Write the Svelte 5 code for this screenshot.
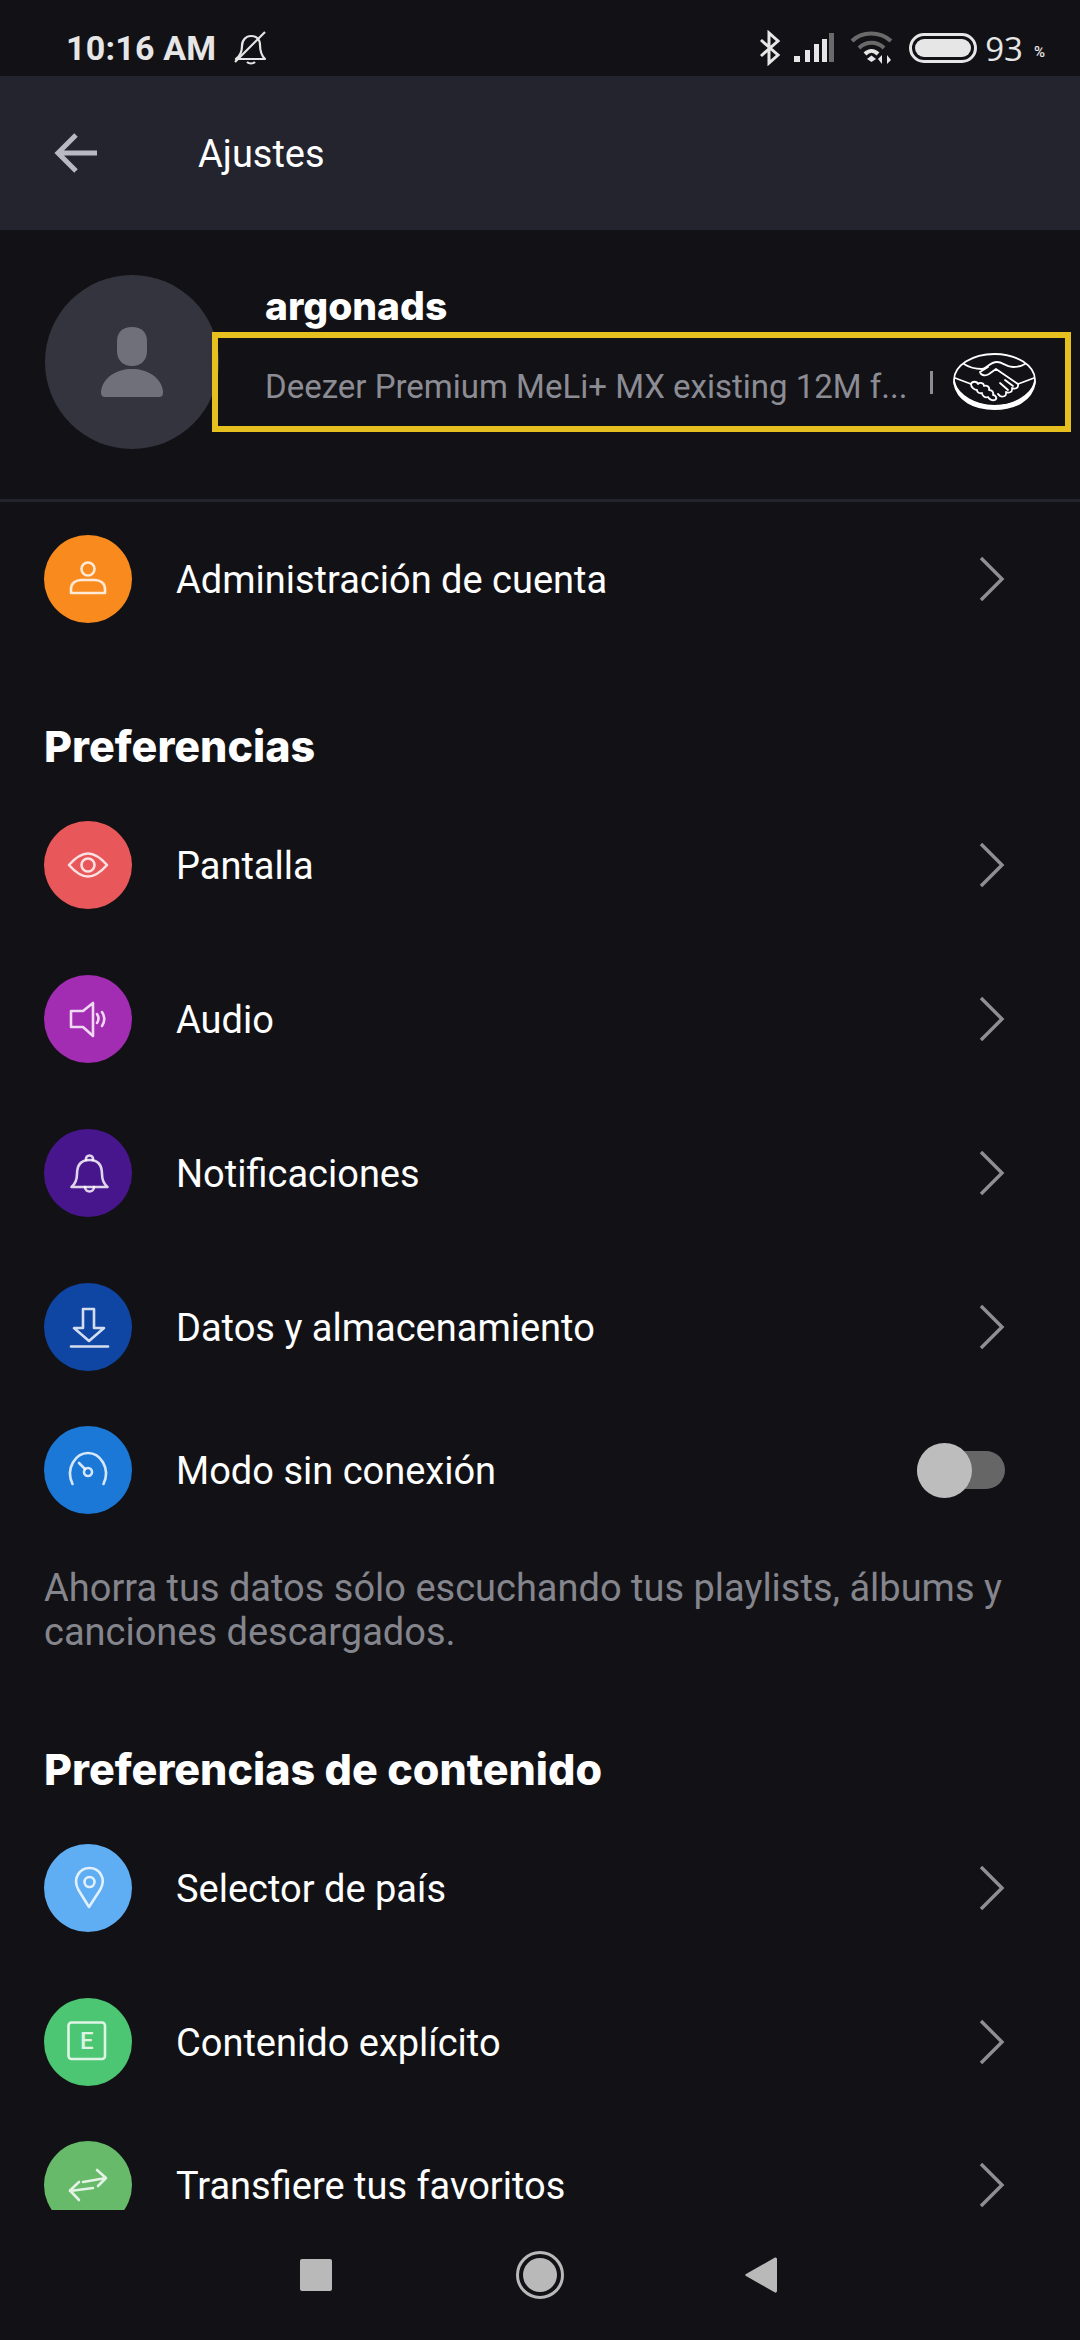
<script lang="ts">
  const prefs = [
    { label: 'Pantalla', tone: 'red', icon: 'eye' },
    { label: 'Audio', tone: 'purple', icon: 'speaker' },
    { label: 'Notificaciones', tone: 'violet', icon: 'bell' },
    { label: 'Datos y almacenamiento', tone: 'navy', icon: 'download' },
  ];
  const content = [
    { label: 'Selector de país', tone: 'sky', icon: 'pin' },
    { label: 'Contenido explícito', tone: 'green', icon: 'explicit' },
  ];
</script>

{#snippet chevron()}
  <svg class="chev" width="26" height="46" viewBox="0 0 26 46" fill="none">
    <path d="M2 2 L23 23 L2 44" stroke="#8e8e94" stroke-width="3.4" />
  </svg>
{/snippet}

{#snippet glyph(name: string)}
  <svg width="88" height="88" viewBox="0 0 88 88" fill="none" stroke="currentColor" stroke-width="2.6" stroke-linejoin="round" stroke-linecap="round">
    {#if name === 'user'}
      <circle cx="44" cy="34" r="6.500" />
      <path d="M27 58 V54 C27 48 32 45 37 45 H51 C56 45 61 48 61 54 V58 Z" />
    {:else if name === 'eye'}
      <path d="M25 44 C32 36 38 32.500 44 32.500 C50 32.500 56 36 63 44 C56 52 50 55.500 44 55.500 C38 55.500 32 52 25 44 Z" />
      <circle cx="44" cy="44" r="6.500" />
    {:else if name === 'speaker'}
      <path d="M27 36 H39 L49 28 V61 L39 52 H27 Z" />
      <path d="M53 39 C55 42 55 45 53 48" />
      <path d="M58 37 C61 41 61 47 58 51" />
    {:else if name === 'bell'}
      <path d="M27.500 58 C31 55 33 51 33 45 C33 36 37 31 45.500 31 C54 31 58 36 58 45 C58 51 60 55 63.500 58 Z" />
      <path d="M42 31 C41 25 50 25 49 31" />
      <path d="M41 58 C41 64 50 64 50 58" />
    {:else if name === 'download'}
      <path d="M39 26 H50 V45 H60 L45 58 L30 45 H39 Z" />
      <path d="M27 63.500 H64" />
    {:else if name === 'gauge'}
      <path d="M28.500 58 C21 42 32 27 44 27 C56 27 67 42 59.500 58" />
      <circle cx="44" cy="46" r="4" />
      <path d="M35 37 L41 43" />
    {:else if name === 'pin'}
      <path d="M45 63 L34.500 46 C28 34 36 24 45.500 24 C55 24 63 34 56 46 Z" />
      <circle cx="45.500" cy="38" r="5" />
    {:else if name === 'explicit'}
      <rect x="24.500" y="24.500" width="36.500" height="36.500" rx="3" />
      <text x="42.700" y="51" text-anchor="middle" class="e-mark">E</text>
    {:else if name === 'swap'}
      <path d="M39 41 L62 37 M53 29 L62 37 L54 45" />
      <path d="M49 47 L26 50 M35 41 L26 49.500 L35 59" />
    {/if}
  </svg>
{/snippet}

{#snippet row(label: string, tone: string, icon: string)}
  <div class="row">
    <span class="badge {tone}">{@render glyph(icon)}</span>
    <span class="label">{label}</span>
    {@render chevron()}
  </div>
{/snippet}

<div class="screen">
  <div class="status">
    <span class="time">10:16 AM</span>
    <svg class="muted-bell" width="34" height="34" viewBox="0 0 34 34" fill="none" stroke="#e6e6e6" stroke-width="2.200" stroke-linejoin="round">
      <path d="M2 28 H31 C27 24 26 20 26 14 C26 8 22 5 17 5 C12 5 8 9 8 15 C8 20 6 25 2 28 Z" />
      <path d="M13 31 C15 33 19 33 21 31" />
      <path d="M1 31 L31 1" />
    </svg>
    <span class="status-gap"></span>
    <svg class="s-bt" width="22" height="36" viewBox="0 0 22 36" fill="none" stroke="#e6e6e6" stroke-width="3">
      <path d="M2 10 L19 25 L10 33 V3 L19 11 L2 26" />
    </svg>
    <svg class="s-signal" width="40" height="30" viewBox="0 0 40 30">
      <rect x="0" y="23" width="6" height="6" fill="#e6e6e6" />
      <rect x="11" y="17" width="5" height="12" fill="#e6e6e6" />
      <rect x="20" y="11" width="5" height="18" fill="#e6e6e6" />
      <rect x="28" y="6" width="5" height="23" fill="#e6e6e6" />
      <rect x="35" y="0" width="5" height="29" fill="#6a6a6a" />
    </svg>
    <svg class="s-wifi" width="44" height="34" viewBox="0 0 44 34" fill="none">
      <path d="M2 10 C12 0 30 0 41 10" stroke="#6a6a6a" stroke-width="4" />
      <path d="M9 17 C16 10 27 10 34 17" stroke="#6a6a6a" stroke-width="4" />
      <path d="M15 23 C19 19 24 19 28 23" stroke="#e6e6e6" stroke-width="4" />
      <path d="M17 28 L21.500 24.500 L26 28 L21.500 31 Z" fill="#e6e6e6" />
      <path d="M32 24 V33 L28 28 Z M37 33 V24 L41 29 Z" fill="#e6e6e6" />
    </svg>
    <span class="s-batt"><span class="s-batt-fill"></span></span>
    <span class="s-pct">93</span>
    <span class="s-unit">%</span>
  </div>

  <div class="toolbar">
    <svg width="44" height="42" viewBox="0 0 44 42" fill="none" stroke="#b9b9c3" stroke-width="5">
      <path d="M43 21 H4 M22 3 L4 21 L22 39" />
    </svg>
    <span class="title">Ajustes</span>
  </div>

  <div class="scroll">
    <div class="profile">
      <div class="avatar">
        <svg width="62" height="70" viewBox="0 0 62 70" fill="#70707a">
          <path d="M31 0 C41 0 46 6 46 14 V24 C46 33 40 39 31 39 C22 39 16 33 16 24 V14 C16 6 21 0 31 0 Z" />
          <path d="M0 64 C2 50 16 42 31 42 C46 42 60 50 62 64 V66 C62 69 60 70 58 70 H4 C2 70 0 69 0 66 Z" />
        </svg>
      </div>
      <div class="info">
        <div class="name">argonads</div>
        <div class="plan">
          <span class="plan-text">Deezer Premium MeLi+ MX existing 12M f...</span>
          <span class="plan-sep"></span>
          <svg width="84" height="58" viewBox="0 0 84 58" fill="none" stroke="#fff" stroke-width="1.800" stroke-linejoin="round" stroke-linecap="round">
            <ellipse cx="41.500" cy="27" rx="40.500" ry="26" />
            <path d="M1 29 C4 48 22 56 41.500 56 C61 56 79 48 82 29 C78 43 60 53 41.500 53 C23 53 5 43 1 29 Z" fill="#fff" />
            <path d="M11 11 C17 15 24 16 29 16 C33 16 37 9 44 9 C50 9 53 14 60 14 C65 14 69 13 72 11" />
            <path d="M35 14 L27 19 C28 23 33 23 36 21 L43 16 L65 31 C66 36 61 36 59 35 M59 35 C60 40 55 40 53 39 M53 39 C54 44 49 44 47 43 L45 41" />
            <path d="M65 31 L81 25" />
            <path d="M2 25 L18 31" />
            <path d="M18 31 C19 28 24 28 25 31 C27 29 31 30 31 33 C34 32 37 34 36 37 C39 37 41 39 40 42 C42 42 45 45 42 47 C39 48 36 46 35 44 C32 45 29 43 29 40 C26 41 24 39 24 37 C21 37 18 34 18 31 Z" />
            <path d="M47 30 L55 37 M52 27 L60 33" />
          </svg>
        </div>
      </div>
    </div>

    <div class="list-top">
      {@render row('Administración de cuenta', 'orange', 'user')}
    </div>

    <h2 class="section first">Preferencias</h2>
    {#each prefs as p}
      {@render row(p.label, p.tone, p.icon)}
    {/each}
    <div class="row short">
      <span class="badge blue">{@render glyph('gauge')}</span>
      <span class="label">Modo sin conexión</span>
      <span class="toggle"><span class="knob"></span></span>
    </div>
    <p class="note">Ahorra tus datos sólo escuchando tus playlists, álbums y canciones descargados.</p>

    <h2 class="section">Preferencias de contenido</h2>
    {#each content as c}
      {@render row(c.label, c.tone, c.icon)}
    {/each}
    <div class="row short">
      <span class="badge leaf">{@render glyph('swap')}</span>
      <span class="label">Transfiere tus favoritos</span>
      {@render chevron()}
    </div>
  </div>

  <div class="nav">
    <span class="nav-square"></span>
    <span class="nav-home"><span class="nav-dot"></span></span>
    <svg class="nav-back" width="32" height="36" viewBox="0 0 32 36" fill="#b9b9b9">
      <path d="M30 0.500 C31 0.500 32 1 32 2 V34 C32 35 31 36 30 35.500 L1 19 C0 18.500 0 17.500 1 17 Z" />
    </svg>
  </div>
</div>

<style>
  :global(body) { margin: 0; background: #121216; }
  .screen {
    width: 1080px; height: 2340px;
    display: flex; flex-direction: column;
    background: #121216; color: #fff;
    font-family: Roboto, "Noto Sans", sans-serif;
    overflow: hidden;
  }

  .status {
    height: 76px; flex: none;
    display: flex; align-items: center;
    padding: 20px 35px 0 66px;
    box-sizing: border-box;
    color: #e6e6e6;
  }
  .time { font-size: 34px; font-weight: 700; letter-spacing: 0.2px; }
  .muted-bell { margin-left: 18px; }
  .status-gap { flex: 1; }
  .s-bt { margin-right: 13px; }
  .s-signal { margin-right: 16px; }
  .s-wifi { margin-right: 15px; }
  .s-batt {
    width: 68px; height: 30px; box-sizing: border-box;
    border: 3px solid #e6e6e6; border-radius: 15px;
    padding: 3px; display: flex;
    margin-right: 8px;
  }
  .s-batt-fill { flex: 1; background: #e6e6e6; border-radius: 9px; }
  .s-pct { font-family: "Open Sans", sans-serif; font-size: 33px; font-weight: 400; }
  .s-unit { font-size: 15px; font-weight: 500; margin-left: 11px; margin-top: 8px; }

  .toolbar {
    height: 154px; flex: none;
    display: flex; align-items: center;
    background: #23242e;
    padding-left: 54px;
  }
  .title { font-size: 38px; margin-left: 100px; padding-top: 2px; }

  .scroll { height: 1980px; flex: none; overflow: hidden; }

  .profile {
    height: 272px; box-sizing: border-box;
    display: flex; align-items: flex-start;
    padding: 45px 0 0 45px;
    border-bottom: 3px solid #23242e;
  }
  .avatar {
    width: 174px; height: 174px; flex: none;
    border-radius: 50%; background: #33343e;
    display: flex; align-items: center; justify-content: center;
  }
  .info { margin-left: -7px; margin-top: 9px; width: 859px; }
  .name {
    font-family: Inter, sans-serif; font-weight: 800;
    font-size: 39px; line-height: 44px;
    padding-left: 53px; margin-bottom: 4px;
  }
  .plan {
    height: 100px; box-sizing: border-box;
    border: 6px solid #e6c01e;
    display: flex; align-items: center;
    padding: 0 27px 0 47px;
    position: relative;
  }
  .plan-text { font-size: 33px; color: #8c8c94; white-space: nowrap; width: 665px; padding-top: 8px; }
  .plan-sep { width: 3px; height: 23px; background: #8c8c94; margin-right: 20px; }

  .row {
    height: 154px; box-sizing: border-box;
    display: flex; align-items: center;
    padding: 0 75px 0 44px;
  }
  .row.short { height: 132px; }
  .badge {
    width: 88px; height: 88px; flex: none; border-radius: 50%;
    color: rgba(255, 255, 255, 0.82);
    display: block;
  }
  .badge svg { display: block; }
  .label { flex: 1; margin-left: 44px; font-size: 38px; padding-top: 2px; }
  .chev { flex: none; }
  .e-mark {
    font-family: Roboto, sans-serif; font-size: 24px; font-weight: 500;
    fill: currentColor; stroke: none;
  }

  .orange { background: #f98a1e; }
  .red { background: #e8585a; }
  .purple { background: #a22cb2; }
  .violet { background: #48168c; }
  .navy { background: #0f46a4; }
  .blue { background: #1b78d6; }
  .sky { background: #5fadf3; }
  .green { background: #4cc672; }
  .leaf { background: #66ba6a; }

  .section {
    margin: 93px 0 20px 44px;
    font-family: Inter, sans-serif; font-weight: 800;
    font-size: 43px; line-height: 44px;
  }
  .section.first { margin-top: 68px; }

  .toggle {
    width: 88px; height: 38px; flex: none;
    border-radius: 19px; background: #666;
    display: flex; align-items: center;
  }
  .knob { width: 55px; height: 55px; border-radius: 50%; background: #bdbdbd; }

  .note {
    margin: 30px 44px 0;
    font-size: 38px; line-height: 44px;
    color: #85858d;
  }

  .nav {
    flex: 1;
    display: flex; align-items: center; justify-content: flex-start;
    padding-left: 300px;
  }
  .nav-square { width: 32px; height: 32px; border-radius: 2px; background: #b9b9b9; }
  .nav-home {
    width: 48px; height: 48px; box-sizing: border-box;
    border: 3px solid #b9b9b9; border-radius: 50%;
    margin-left: 184px; margin-right: 181px;
    display: flex; align-items: center; justify-content: center;
  }
  .nav-dot { width: 34px; height: 34px; border-radius: 50%; background: #b9b9b9; }
</style>
